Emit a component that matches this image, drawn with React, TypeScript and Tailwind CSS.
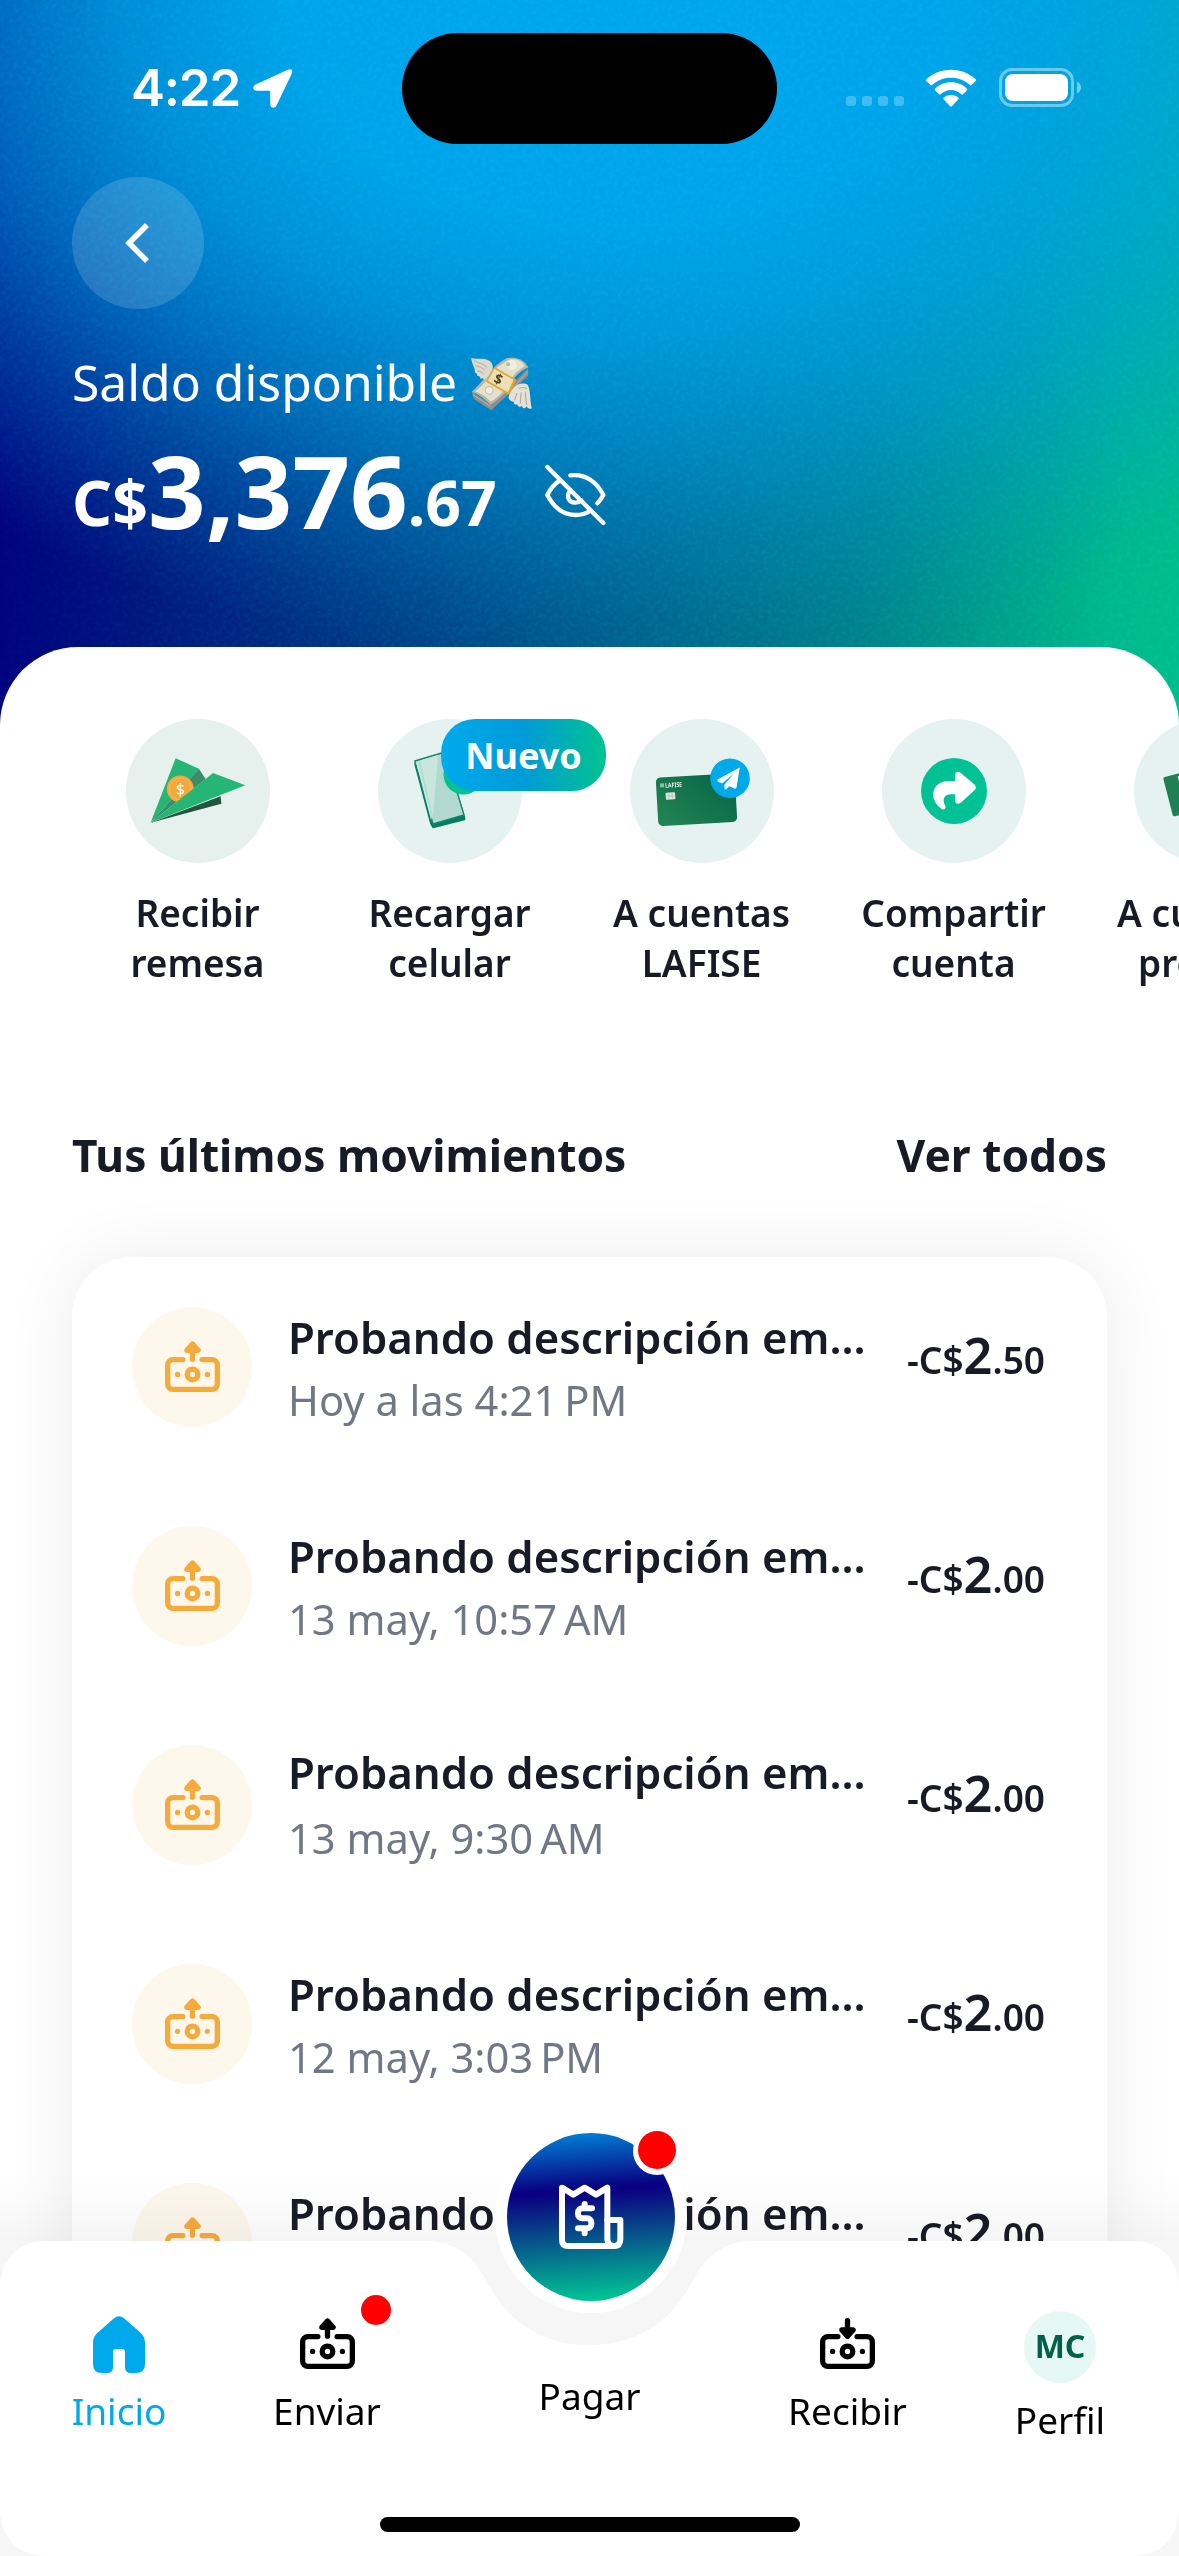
import React from "react";

const font = "font-['Noto_Sans','Open_Sans',sans-serif]";

function LocationArrow() {
  return (
    <svg className="h-[40px] w-[40px]" viewBox="0 0 40 40" fill="white" stroke="white" strokeWidth="1.500" strokeLinejoin="round">
      <path d="M35 2.500 3 17.200C-0.300 19 0.800 22 3.800 22H16.400C17.300 22 18 22.600 18 23.500V36C18 39.400 21.400 40 23 36.800L38 5.500C39.400 2.500 38 1 35 2.500Z" />
    </svg>
  );
}

function Wifi() {
  return (
    <svg className="h-[38px] w-[50px]" viewBox="0 0 150 114" fill="white">
      <path d="M75 2C104 2 131 13 149 31c1.500 1.500 1.500 3.500 0 5L137 48c-1.500 1.500-3.500 1.500-5 0C117 34 97 26 75 26S33 34 18 48c-1.500 1.500-3.500 1.500-5 0L1 36c-1.500-1.500-1.500-3.500 0-5C19 13 46 2 75 2Z" />
      <path d="M75 40c19 0 36 7 48 19 1.500 1.500 1.500 3.500 0 5L111 76c-1.500 1.500-3.500 1.500-5 0-8-8-19-13-31-13s-23 5-31 13c-1.500 1.500-3.500 1.500-5 0L27 64c-1.500-1.500-1.500-3.500 0-5 12-12 29-19 48-19Z" />
      <path d="M75 78c9 0 16 3 22 8 1.500 1.500 1.500 3 0 5L78 112c-2 2-4 2-6 0L53 91c-1.500-2-1.500-3.500 0-5 6-5 13-8 22-8Z" />
    </svg>
  );
}

function Battery() {
  return (
    <svg className="h-[40px] w-[83px]" viewBox="0 0 83 40">
      <rect x="1.500" y="1.500" width="72" height="36" rx="11.500" fill="none" stroke="white" strokeOpacity="0.42" strokeWidth="3" />
      <rect x="6" y="6" width="63" height="27" rx="8" fill="white" />
      <path d="M78 13.500c2.500 1.200 4 3.300 4 6s-1.500 4.800-4 6Z" fill="white" fillOpacity="0.45" />
    </svg>
  );
}

function FlyingMoney() {
  return (
    <svg className="h-[54px] w-[61px]" viewBox="38 34 182 162">
      <path d="M40 138 96 174 150 128 209 68V90L150 146 98 194 46 160Z" fill="#8c8f8f" />
      <path d="M44 147 97 183 M152 138 208 78" stroke="#c3c5c2" strokeWidth="2" fill="none" />
      <path d="M40 138C72 112 100 60 144 38c22-5 50-2 66 27-28 14-42 26-60 62-16 24-38 40-54 50-14-16-34-30-56-39Z" fill="#b7b5a8" />
      <path d="M50 137c26-18 42-44 66-72l34-23c18-3 40-1 50 20-28 14-40 32-56 62-16 22-32 36-48 44-12-14-28-24-46-31Z" fill="#e4e0cd" />
      <circle cx="160" cy="58" r="15" fill="#f1eedf" />
      <circle cx="149" cy="56" r="6" fill="#9fc7ab" />
      <circle cx="92" cy="134" r="12" fill="#f1eedf" stroke="#aaa99f" strokeWidth="2" />
      <path d="M108 64 174 102 150 147 82 108Z" fill="#e9a51f" />
      <path d="M108 70 165 102 148 140 88 105Z" fill="#e9dfbd" />
      <text x="120" y="115" fontSize="42" fontWeight="700" fill="#5a3d10" textAnchor="middle" transform="rotate(24 120 100)" fontFamily="Noto Sans">$</text>
      <path d="M38 37c20 6 46-4 61 14 7 12 4 22-4 31-4 8-12 20-20 20 2-6-4-5-10-3 2-6-3-8-9-8 1-6-2-9-7-10 3-12-9-24-11-44Z" fill="#dcd9cd" />
      <path d="M46 44c14 10 28 8 40 22M50 60c10 2 22 6 30 14M56 76c8 0 14 4 20 10" stroke="#b0ada1" strokeWidth="3" fill="none" />
      <path d="M168 124c8-11 30-14 40-6 9 20 6 48 12 70-8 4-12 0-16-6-4 8-10 8-14-2-6 6-12 4-14-4-8 2-10-2-10-8-8 0-14-6-16-12 2-14 10-24 18-32Z" fill="#e4e1d6" />
      <path d="M180 130c8-6 18-6 25 0M176 142l-8 22M188 140l-3 34M200 138l4 40" stroke="#aaa79b" strokeWidth="3" fill="none" />
    </svg>
  );
}

function EyeOff() {
  return (
    <svg className="h-[64px] w-[64px]" viewBox="254 354 192 192" fill="none" stroke="white" strokeWidth="13" strokeLinecap="round" strokeLinejoin="round">
      <path d="M264 366 432 534" />
      <path d="M333 391C380 386 410 408 432 450Q425 464 414 475" />
      <path d="M302 406C284 417 272 433 264 450C284 488 314 510 348 510C364 510 380 506 392 498" />
      <path d="M334 436C318 452 328 474 349 473C356 473 362 470 366 466" />
    </svg>
  );
}

function Banknote({ down = false, className }: { down?: boolean; className: string }) {
  return (
    <svg className={className} viewBox="190 180 172 160" fill="none" stroke="currentColor" strokeWidth="16" strokeLinecap="round" strokeLinejoin="round">
      <path d="M247 239H217a16 16 0 0 0-16 16V313a16 16 0 0 0 16 16H335a16 16 0 0 0 16-16V255a16 16 0 0 0-16-16H305" />
      <circle cx="276" cy="284" r="16" />
      <circle cx="231" cy="284" r="8" fill="currentColor" stroke="none" />
      <circle cx="321" cy="284" r="8" fill="currentColor" stroke="none" />
      <path d={down ? "M276 191V238M259 219 276 238 293 219Z" : "M276 238V193M259 211 276 192 293 211Z"} />
    </svg>
  );
}

function PaperPlaneArt() {
  return (
    <svg className="h-[144px] w-[144px]" viewBox="0 0 144 144">
      <path d="M24.600 103.700 94.600 77.300 95.400 84.700Z" fill="#22563d" />
      <path d="M24.600 103.700 49.600 39.300 72.900 49.700Z" fill="#25b675" />
      <path d="M24.600 103.700 72.900 49.700 79.600 60Z" fill="#3c8b6b" />
      <circle cx="54.300" cy="70" r="13.500" fill="#f4a93c" />
      <circle cx="54.300" cy="70" r="11" fill="none" stroke="#f8c070" strokeWidth="0.700" />
      <text x="54.300" y="76" fontSize="16" fill="white" textAnchor="middle" fontFamily="Noto Sans">$</text>
      <path d="M24.600 103.700 87 54 119.300 66.300Z" fill="#25b675" />
    </svg>
  );
}

function PhoneArt() {
  return (
    <svg className="h-[144px] w-[144px]" viewBox="0 0 144 144">
      <path d="M37 45 67 36 86.500 98.500V100.500L55 108.500 53 105Z" fill="#007f61" stroke="#007f61" strokeWidth="1.500" strokeLinejoin="round" />
      <path d="M36.800 42 67 33 86 96 55 105Z" fill="#b1d9cf" stroke="#15856a" strokeWidth="1.400" strokeLinejoin="round" />
      <path d="M42 41.500 60 36 55 98Z M38 43 40 42 54 98 53 101Z" fill="#c8e6de" />
      <circle cx="85.500" cy="55.500" r="20" fill="#00c48f" />
    </svg>
  );
}

function CardArt() {
  return (
    <svg className="h-[144px] w-[144px]" viewBox="0 0 144 144">
      <defs>
        <linearGradient id="cardGreen" x1="0" y1="1" x2="1" y2="0.300">
          <stop offset="0" stopColor="#248552" />
          <stop offset="1" stopColor="#076849" />
        </linearGradient>
      </defs>
      <g transform="rotate(-3.300 66 81)">
        <rect x="27" y="56.500" width="79" height="48.500" rx="4.500" fill="url(#cardGreen)" />
        <rect x="31" y="62.500" width="4" height="4" fill="#8ebca6" />
        <text x="36" y="67" fontSize="6.500" fontWeight="600" fill="white" fontFamily="Noto Sans" textLength="17" lengthAdjust="spacingAndGlyphs">LAFISE</text>
        <rect x="36" y="72" width="9.500" height="7" rx="1" fill="#dfe6e2" />
        <path d="M36 75.500H45.500M39 72V79M42.500 72V79" stroke="#a8b8b0" strokeWidth="0.600" />
      </g>
      <circle cx="100" cy="59.300" r="19.800" fill="#00a9ea" />
      <path d="M109.800 48.500 87.500 60.500Q87 62.500 89 63.200L92.500 64.200 104 54.500 94.500 65.500V69.500Q95.300 71.500 97 69.500L99.300 67.200 104.500 69.500Q106 70 106.500 68.500Z" fill="white" />
    </svg>
  );
}

function ShareArt() {
  return (
    <svg className="h-[144px] w-[144px]" viewBox="0 0 144 144">
      <circle cx="72" cy="72" r="33" fill="#00c295" />
      <path d="M73 62V56.500C73 52.800 76 51.600 78.500 53.800L92.500 65.500C94.300 67.300 94.300 69.500 92.500 71.300L79 83.500C76 86 73 84.500 73 81V75.300H69C61 75.300 60.500 81.500 63 86.500C65 90 61.500 91.500 59 89.500C46 79.500 50 62 67 62Z" fill="white" />
    </svg>
  );
}

function TransferArt() {
  return (
    <svg className="h-[144px] w-[144px]" viewBox="0 0 144 144">
      <g transform="rotate(-14.500 29 58.500)">
        <rect x="29" y="58.500" width="78" height="40.500" rx="2" fill="#208053" />
        <path d="M44 61V77a3 3 0 0 0 3 3H70" fill="none" stroke="#d8e8df" strokeWidth="1.200" />
      </g>
    </svg>
  );
}

const actions = [
  { lines: ["Recibir", "remesa"], art: <PaperPlaneArt />, bg: "bg-[#e6f0ec]" },
  { lines: ["Recargar", "celular"], art: <PhoneArt />, bg: "bg-[#e5f2ef]", badge: "Nuevo" },
  { lines: ["A cuentas", "LAFISE"], art: <CardArt />, bg: "bg-[#e5f2ef]" },
  { lines: ["Compartir", "cuenta"], art: <ShareArt />, bg: "bg-[#e5f2ef]" },
  { lines: ["A cuentas", "propias"], art: <TransferArt />, bg: "bg-[#e5f2ef]" },
];

const movements = [
  { date: "Hoy a las 4:21\u202fPM", cents: ".50", title: "leading-[61px]" },
  { date: "13 may, 10:57\u202fAM", cents: ".00", title: "leading-[61px]" },
  { date: "13 may, 9:30\u202fAM", cents: ".00", title: "-mt-[3px] mb-[3px] leading-[61px]" },
  { date: "12 may, 3:03\u202fPM", cents: ".00", title: "leading-[61px]" },
  { date: "12 may, 2:48\u202fPM", cents: ".00", title: "leading-[61px]" },
];

function StatusBar() {
  return (
    <div className="flex h-[177px] items-center">
      <div className="-mt-[2px] flex w-[402px] items-center gap-[13px] pl-[131px]">
        <span className="font-['Inter',sans-serif] text-[51px] font-semibold leading-[60px] tracking-[-1.200px]">4:22</span>
        <LocationArrow />
      </div>
      <div className="h-[111px] w-[375px] rounded-full bg-black" />
      <div className="-mt-px flex items-center pl-[69px]">
        <div className="mt-[26px] flex gap-[6px]">
          {[0, 1, 2, 3].map((i) => (
            <div key={i} className="h-[10px] w-[10px] rounded-[3px] bg-white/25" />
          ))}
        </div>
        <div className="ml-[22px]"><Wifi /></div>
        <div className="ml-[23px]"><Battery /></div>
      </div>
    </div>
  );
}

function Header() {
  return (
    <header className="relative h-[780px] shrink-0 bg-[#00007c] text-white">
      <div className="absolute inset-0 bg-[linear-gradient(92deg,#00007c_0%,#00107c_10%,#005488_48%,#008088_73%,#00b88a_94%,#00bd8b_100%)]" />
      <div className="absolute inset-0 bg-[radial-gradient(ellipse_1000px_670px_at_620px_0px,#00a5ee_0%,#00a3ea_33%,rgba(0,160,230,0.860)_50%,rgba(0,155,225,0.620)_66%,rgba(0,150,218,0.340)_80%,rgba(0,145,210,0.120)_92%,rgba(0,140,200,0)_100%)]" />
      <svg className="absolute inset-0 h-full w-full opacity-[0.160] mix-blend-soft-light">
        <filter id="grain">
          <feTurbulence type="fractalNoise" baseFrequency="0.220" numOctaves="2" />
          <feColorMatrix values="0 0 0 0 1  0 0 0 0 1  0 0 0 0 1  3 0 0 0 -1.200" />
        </filter>
        <rect width="100%" height="100%" filter="url(#grain)" />
      </svg>
      <div className="relative">
        <StatusBar />
        <button className="ml-[72px] flex h-[132px] w-[132px] items-center justify-center rounded-full bg-white/15">
          <svg className="h-[42px] w-[30px]" viewBox="0 0 30 42" fill="none" stroke="white" strokeWidth="5.500">
            <path d="M24 3 6 21 24 39" />
          </svg>
        </button>
        <div className="ml-[72px] mt-[39px] flex h-[69px] items-center gap-[14px]">
          <span className="text-[49.800px] leading-[69px]">Saldo disponible</span>
          <div className="mt-[3px]"><FlyingMoney /></div>
        </div>
        <div className="ml-[72px] mt-[12px] flex h-[120px] items-center">
          <div className="mt-[17px] flex items-baseline font-bold leading-[120px]">
            <span className="relative -top-[3px] text-[62.500px]">C$</span>
            <span className="text-[101px]">3,376</span>
            <span className="relative -top-[3px] text-[62.500px]">.67</span>
          </div>
          <div className="ml-[47px] mt-3"><EyeOff /></div>
        </div>
      </div>
    </header>
  );
}

function QuickActions() {
  return (
    <div className="flex pl-[72px] pt-[72px]">
      {actions.map((a, i) => (
        <div key={i} className="flex w-[252px] shrink-0 flex-col items-center">
          <div className={"relative h-[144px] w-[144px] rounded-full " + a.bg}>
            {a.art}
            {a.badge && (
              <div className="absolute left-[63px] top-0 flex h-[72px] w-[165px] items-center justify-center rounded-[34px] bg-[linear-gradient(90deg,#00aaec_0%,#009bd8_50%,#00c292_98%)] pt-[2px] text-[36px] font-bold leading-none text-white">
                {a.badge}
              </div>
            )}
          </div>
          <div className="mr-px mt-[25px] text-center text-[37px] font-semibold leading-[50px]">
            <div>{a.lines[0]}</div>
            <div>{a.lines[1]}</div>
          </div>
        </div>
      ))}
    </div>
  );
}

function Movements() {
  return (
    <div className="mx-[72px] mt-[72px] h-[1200px] rounded-[60px] bg-white shadow-[0_0_70px_rgba(0,0,0,0.080)]">
      {movements.map((m, i) => (
        <div key={i} className="flex h-[219px] items-center pl-[60px] pr-[62px]">
          <div className="flex h-[120px] w-[120px] items-center justify-center rounded-full bg-[#fef7ec] text-[#f5ab3c]">
            <Banknote className="h-[53px] w-[57px]" />
          </div>
          <div className="ml-[36px] mt-[3px] flex-1 whitespace-nowrap leading-[61px]">
            <div className={"text-[43.700px] font-semibold " + m.title}>Probando descripción em...</div>
            <div className="pt-px text-[41.700px] text-[#717784]">{m.date}</div>
          </div>
          <div className="flex items-baseline pb-[18px] font-semibold leading-[60px]">
            <span className="text-[37px]">-C$</span>
            <span className="text-[50.500px]">2</span>
            <span className="text-[37px]">{m.cents}</span>
          </div>
        </div>
      ))}
    </div>
  );
}

function ReceiptIcon() {
  return (
    <svg className="h-[66px] w-[67px]" viewBox="202 192 201 198" fill="none" stroke="white" strokeWidth="18" strokeLinecap="round" strokeLinejoin="round">
      <path d="M214 203 248 224 282 203 316 224 350 203V358Q352 378 370 378H233Q214 378 214 359Z" />
      <path d="M350 300H389V357Q389 378 370 378" />
      <path d="M304 265H275a13 13 0 0 0-13 13v4a13 13 0 0 0 13 13H289a13 13 0 0 1 13 13v4a13 13 0 0 1-13 13H262M282 252V264M282 326V340" />
    </svg>
  );
}

function BottomNav() {
  return (
    <nav className="absolute bottom-0 left-0 h-[315px] w-full bg-[#f6f6f6] text-black">
      <div className="absolute bottom-full left-0 h-[72px] w-full bg-[linear-gradient(180deg,rgba(0,0,0,0)_0%,rgba(0,0,0,0.012)_40%,rgba(0,0,0,0.038)_100%)]" />
      <svg className="absolute inset-0 h-full w-full" viewBox="0 0 1179 315" fill="white">
        <path d="M0 48C0 18 18 0 48 0H425C452 0 471 13 483 34C496 60 524 104 589.500 104C655 104 683 60 696 34C708 13 727 0 754 0H1131C1161 0 1179 18 1179 48V267C1179 297 1161 315 1131 315H48C18 315 0 297 0 267Z" />
      </svg>
      <div className="absolute -top-[120px] left-[495px] flex h-[192px] w-[192px] items-center justify-center rounded-full bg-white">
        <div className="flex h-[168px] w-[168px] items-center justify-center rounded-full bg-[linear-gradient(176deg,#0089dc_0%,#080080_34%,#0a0082_36%,#00c494_96%)]">
          <ReceiptIcon />
        </div>
        <div className="absolute left-[138px] top-[6px] flex h-[48px] w-[48px] items-center justify-center rounded-full bg-white">
          <div className="-mt-[2px] h-[38px] w-[38px] rounded-full bg-[#ff0000]" />
        </div>
      </div>
      <div className="relative flex text-[37px] leading-[54px]">
        <div className="flex w-[238px] shrink-0 flex-col items-center pt-[75px] text-[#00a9ec]">
          <svg className="h-[57px] w-[52px]" viewBox="0 0 52 57" fill="currentColor">
            <path d="M21 2.200Q26-1.800 31 2.200L46 15.500Q52 20 52 27V48Q52 57 43 57H38Q32 57 32 51V36Q32 33 29 33H23Q20 33 20 36V51Q20 57 14 57H9Q0 57 0 48V27Q0 20 6 15.500Z" />
          </svg>
          <span className="mt-[11px]">Inicio</span>
        </div>
        <div className="relative flex w-[178px] shrink-0 flex-col items-center pt-[76px]">
          <Banknote className="h-[53px] w-[57px]" />
          <div className="absolute left-[123px] top-[54px] h-[30px] w-[30px] rounded-full bg-[#ff0000]" />
          <span className="mt-[14px]">Enviar</span>
        </div>
        <div className="flex w-[347px] shrink-0 flex-col items-center pt-[128px]">
          <span>Pagar</span>
        </div>
        <div className="flex w-[169px] shrink-0 flex-col items-center pt-[76px]">
          <Banknote down className="h-[53px] w-[57px]" />
          <span className="mt-[14px]">Recibir</span>
        </div>
        <div className="flex w-[256px] shrink-0 flex-col items-center pt-[70px]">
          <div className="flex h-[72px] w-[72px] items-center justify-center rounded-full bg-[#e5f8f3] pb-[2px] text-[32px] font-bold text-[#006049]">MC</div>
          <span className="mt-[10px]">Perfil</span>
        </div>
      </div>
      <div className="absolute bottom-[24px] left-[380px] h-[15px] w-[420px] rounded-full bg-black" />
    </nav>
  );
}

export default function App() {
  return (
    <div className={"relative flex h-[2556px] w-[1179px] flex-col overflow-hidden bg-white text-[#181a26] " + font}>
      <Header />
      <main className="relative -mt-[133px] h-[1909px] shrink-0 overflow-hidden rounded-t-[78px] bg-white">
        <QuickActions />
        <div className="mx-[72px] mt-[137px] flex justify-between text-[44.300px] font-bold leading-[60px]">
          <h2>Tus últimos movimientos</h2>
          <span>Ver todos</span>
        </div>
        <Movements />
      </main>
      <BottomNav />
    </div>
  );
}
